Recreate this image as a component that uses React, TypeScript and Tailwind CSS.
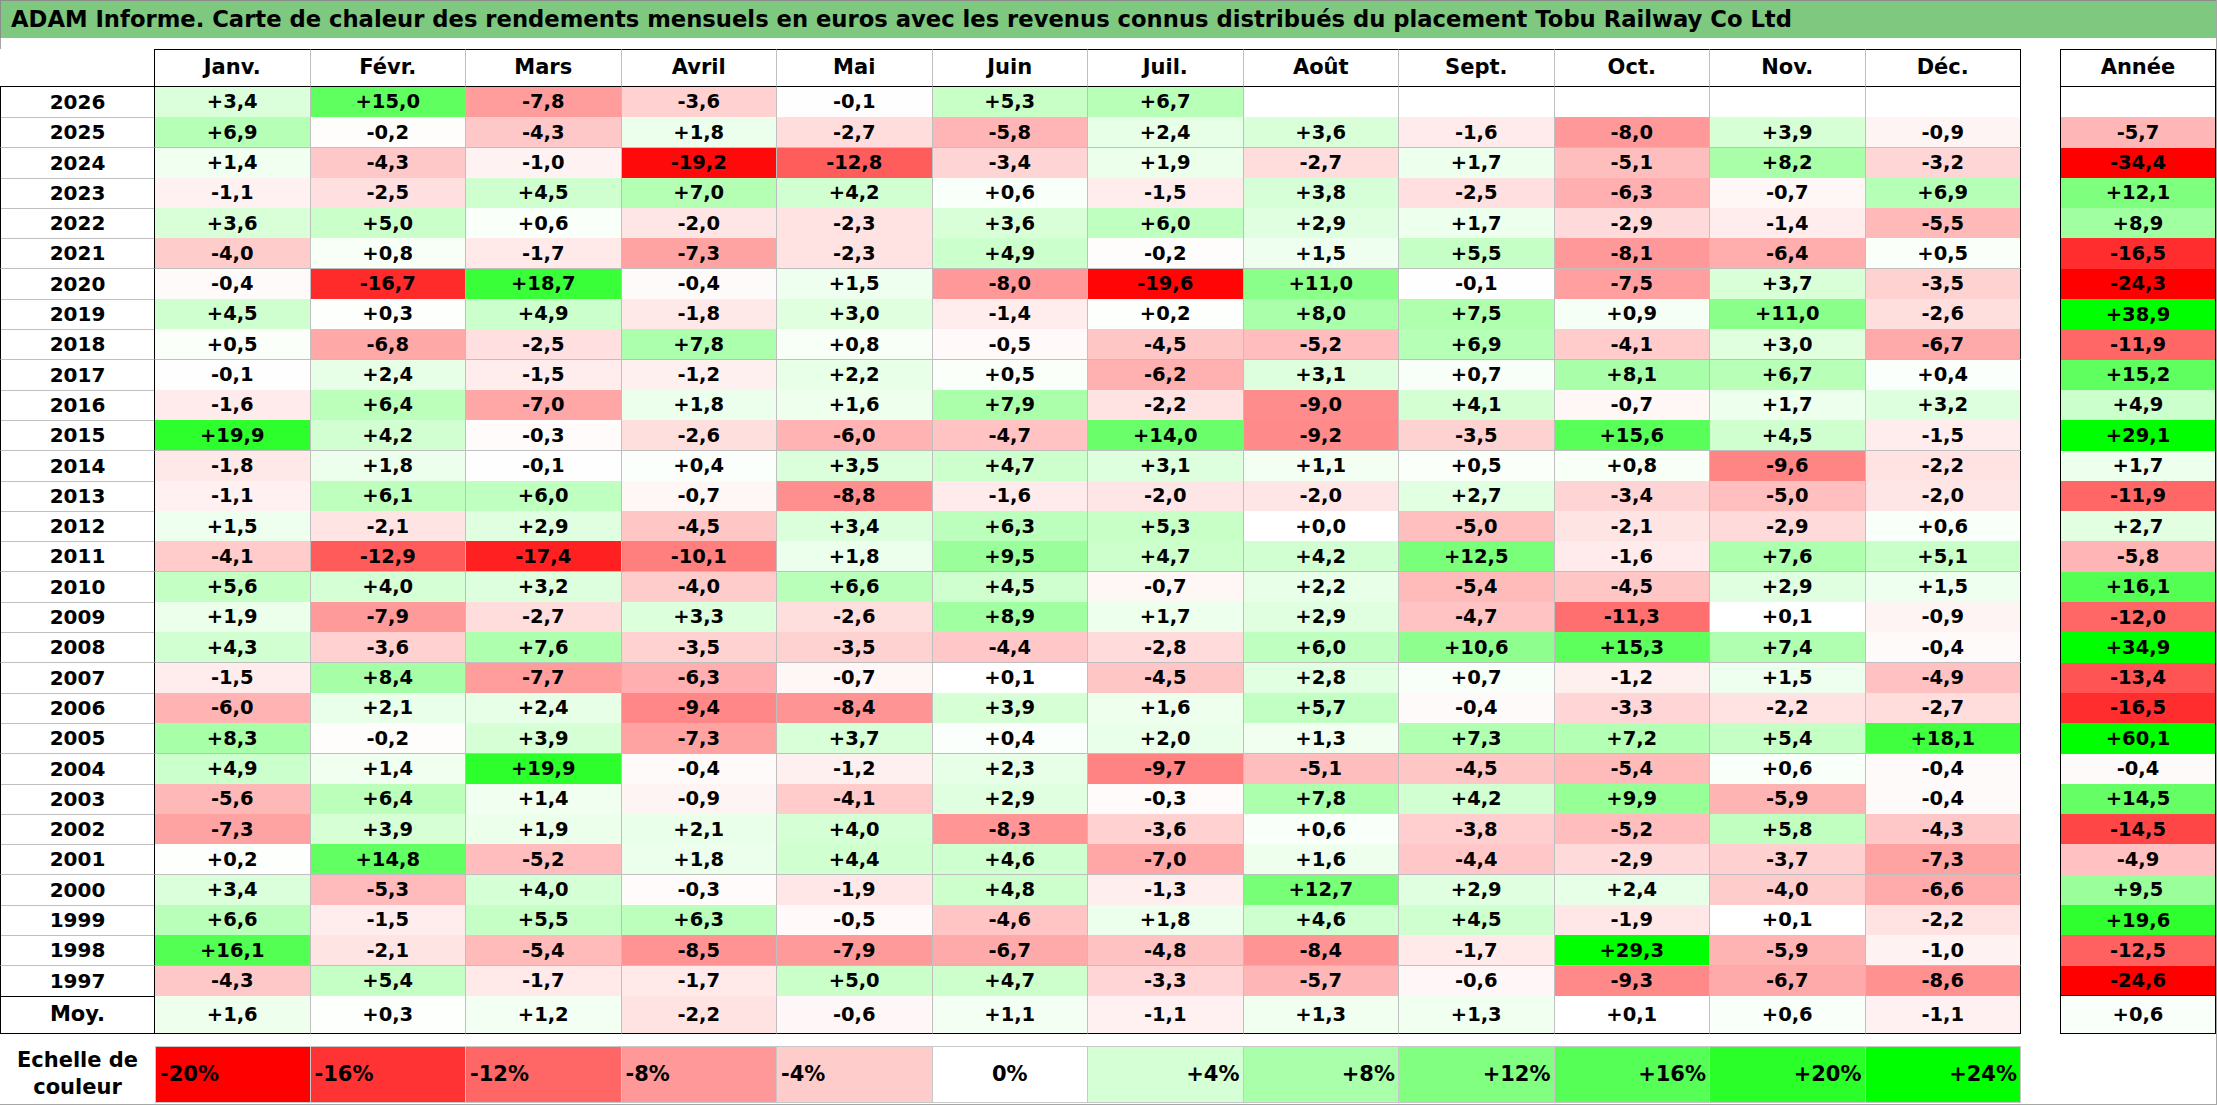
import React from "react";

const MONTHS = ["Janv.", "Févr.", "Mars", "Avril", "Mai", "Juin", "Juil.", "Août", "Sept.", "Oct.", "Nov.", "Déc."];

// year, 12 months, année  ("x" = pas de valeur)
const DATA = `
2026 +3,4 +15,0 -7,8 -3,6 -0,1 +5,3 +6,7 x x x x x x
2025 +6,9 -0,2 -4,3 +1,8 -2,7 -5,8 +2,4 +3,6 -1,6 -8,0 +3,9 -0,9 -5,7
2024 +1,4 -4,3 -1,0 -19,2 -12,8 -3,4 +1,9 -2,7 +1,7 -5,1 +8,2 -3,2 -34,4
2023 -1,1 -2,5 +4,5 +7,0 +4,2 +0,6 -1,5 +3,8 -2,5 -6,3 -0,7 +6,9 +12,1
2022 +3,6 +5,0 +0,6 -2,0 -2,3 +3,6 +6,0 +2,9 +1,7 -2,9 -1,4 -5,5 +8,9
2021 -4,0 +0,8 -1,7 -7,3 -2,3 +4,9 -0,2 +1,5 +5,5 -8,1 -6,4 +0,5 -16,5
2020 -0,4 -16,7 +18,7 -0,4 +1,5 -8,0 -19,6 +11,0 -0,1 -7,5 +3,7 -3,5 -24,3
2019 +4,5 +0,3 +4,9 -1,8 +3,0 -1,4 +0,2 +8,0 +7,5 +0,9 +11,0 -2,6 +38,9
2018 +0,5 -6,8 -2,5 +7,8 +0,8 -0,5 -4,5 -5,2 +6,9 -4,1 +3,0 -6,7 -11,9
2017 -0,1 +2,4 -1,5 -1,2 +2,2 +0,5 -6,2 +3,1 +0,7 +8,1 +6,7 +0,4 +15,2
2016 -1,6 +6,4 -7,0 +1,8 +1,6 +7,9 -2,2 -9,0 +4,1 -0,7 +1,7 +3,2 +4,9
2015 +19,9 +4,2 -0,3 -2,6 -6,0 -4,7 +14,0 -9,2 -3,5 +15,6 +4,5 -1,5 +29,1
2014 -1,8 +1,8 -0,1 +0,4 +3,5 +4,7 +3,1 +1,1 +0,5 +0,8 -9,6 -2,2 +1,7
2013 -1,1 +6,1 +6,0 -0,7 -8,8 -1,6 -2,0 -2,0 +2,7 -3,4 -5,0 -2,0 -11,9
2012 +1,5 -2,1 +2,9 -4,5 +3,4 +6,3 +5,3 +0,0 -5,0 -2,1 -2,9 +0,6 +2,7
2011 -4,1 -12,9 -17,4 -10,1 +1,8 +9,5 +4,7 +4,2 +12,5 -1,6 +7,6 +5,1 -5,8
2010 +5,6 +4,0 +3,2 -4,0 +6,6 +4,5 -0,7 +2,2 -5,4 -4,5 +2,9 +1,5 +16,1
2009 +1,9 -7,9 -2,7 +3,3 -2,6 +8,9 +1,7 +2,9 -4,7 -11,3 +0,1 -0,9 -12,0
2008 +4,3 -3,6 +7,6 -3,5 -3,5 -4,4 -2,8 +6,0 +10,6 +15,3 +7,4 -0,4 +34,9
2007 -1,5 +8,4 -7,7 -6,3 -0,7 +0,1 -4,5 +2,8 +0,7 -1,2 +1,5 -4,9 -13,4
2006 -6,0 +2,1 +2,4 -9,4 -8,4 +3,9 +1,6 +5,7 -0,4 -3,3 -2,2 -2,7 -16,5
2005 +8,3 -0,2 +3,9 -7,3 +3,7 +0,4 +2,0 +1,3 +7,3 +7,2 +5,4 +18,1 +60,1
2004 +4,9 +1,4 +19,9 -0,4 -1,2 +2,3 -9,7 -5,1 -4,5 -5,4 +0,6 -0,4 -0,4
2003 -5,6 +6,4 +1,4 -0,9 -4,1 +2,9 -0,3 +7,8 +4,2 +9,9 -5,9 -0,4 +14,5
2002 -7,3 +3,9 +1,9 +2,1 +4,0 -8,3 -3,6 +0,6 -3,8 -5,2 +5,8 -4,3 -14,5
2001 +0,2 +14,8 -5,2 +1,8 +4,4 +4,6 -7,0 +1,6 -4,4 -2,9 -3,7 -7,3 -4,9
2000 +3,4 -5,3 +4,0 -0,3 -1,9 +4,8 -1,3 +12,7 +2,9 +2,4 -4,0 -6,6 +9,5
1999 +6,6 -1,5 +5,5 +6,3 -0,5 -4,6 +1,8 +4,6 +4,5 -1,9 +0,1 -2,2 +19,6
1998 +16,1 -2,1 -5,4 -8,5 -7,9 -6,7 -4,8 -8,4 -1,7 +29,3 -5,9 -1,0 -12,5
1997 -4,3 +5,4 -1,7 -1,7 +5,0 +4,7 -3,3 -5,7 -0,6 -9,3 -6,7 -8,6 -24,6
`
  .trim()
  .split("\n")
  .map((l) => l.trim().split(/\s+/));

const AVG = "+1,6 +0,3 +1,2 -2,2 -0,6 +1,1 -1,1 +1,3 +1,3 +0,1 +0,6 -1,1 +0,6".split(" ");

const SCALE = [-20, -16, -12, -8, -4, 0, 4, 8, 12, 16, 20, 24];

// rouge jusqu'a -20 %, vert jusqu'a +24 %
const heat = (s: string) => {
  if (s === "x") return "#ffffff";
  const v = parseFloat(s.replace(",", "."));
  if (v < 0) {
    const c = Math.round(255 * (1 - Math.min(1, -v / 20)));
    return `rgb(255,${c},${c})`;
  }
  const c = Math.round(255 * (1 - Math.min(1, v / 24)));
  return `rgb(${c},255,${c})`;
};

const GRID = "grid grid-cols-[155px_repeat(12,minmax(0,1fr))] w-[2021px]";

const App = () => {
  return (
    <div className="w-[2217px] h-[1105px] bg-white border-r border-b border-[#a6a6a6] font-['DejaVu_Sans',sans-serif] font-bold text-black flex flex-col overflow-hidden">
      {/* TITLE */}
      <div className="h-[38px] shrink-0 bg-[#7ec87f] border-t border-l border-[#8c8c8c] flex items-center pl-[10px] text-[22.7px] whitespace-nowrap">
        ADAM Informe. Carte de chaleur des rendements mensuels en euros avec les revenus connus distribués du placement Tobu Railway Co Ltd
      </div>
      <div className="h-[11px] shrink-0 border-l border-[#a6a6a6]" />

      <div className="flex items-start shrink-0">
        {/* MONTHS TABLE */}
        <div className="w-[2021px]">
          <div className={`${GRID} h-[38px]`}>
            <div className="border-r border-b border-black" />
            {MONTHS.map((m, i) => (
              <div
                key={m}
                className={`flex items-center justify-center text-[21px] border-t border-b border-r border-t-black border-b-black ${
                  i === 11 ? "border-r-black" : "border-r-[#bfbfbf]"
                }`}
              >
                {m}
              </div>
            ))}
          </div>

          {DATA.map((row, r) => (
            <div key={row[0]} className={`${GRID} h-[30.3px]`}>
              <div
                className={`flex items-center justify-center text-[20px] border-l border-r border-b border-l-black border-r-black ${
                  r === DATA.length - 1 ? "border-b-black" : "border-b-[#bfbfbf]"
                }`}
              >
                {row[0]}
              </div>
              {row.slice(1, 13).map((v, i) => (
                <div
                  key={i}
                  className={`flex items-center justify-center text-[19.5px] border-r border-b ${
                    i === 11 ? "border-r-black" : "border-r-[#bfbfbf]"
                  } ${r === DATA.length - 1 ? "border-b-black" : "border-b-[#bfbfbf]"}`}
                  style={{ backgroundColor: heat(v) }}
                >
                  {v === "x" ? "" : v}
                </div>
              ))}
            </div>
          ))}

          <div className={`${GRID} h-[38px]`}>
            <div className="flex items-center justify-center text-[21px] border-l border-r border-b border-black">
              Moy.
            </div>
            {AVG.slice(0, 12).map((v, i) => (
              <div
                key={i}
                className={`flex items-center justify-center text-[19.5px] border-r border-b border-b-black ${
                  i === 11 ? "border-r-black" : "border-r-[#bfbfbf]"
                }`}
                style={{ backgroundColor: heat(v) }}
              >
                {v}
              </div>
            ))}
          </div>
        </div>

        <div className="w-[39px] shrink-0" />

        {/* YEAR TABLE */}
        <div className="w-[156px] shrink-0">
          <div className="h-[38px] flex items-center justify-center text-[21px] border border-black">
            Année
          </div>
          {DATA.map((row, r) => (
            <div
              key={row[0]}
              className={`h-[30.3px] flex items-center justify-center text-[19.5px] border-l border-r border-black ${
                r === DATA.length - 1 ? "border-b" : ""
              }`}
              style={{ backgroundColor: heat(row[13]) }}
            >
              {row[13] === "x" ? "" : row[13]}
            </div>
          ))}
          <div
            className="h-[38px] flex items-center justify-center text-[19.5px] border-l border-r border-b border-black"
            style={{ backgroundColor: heat(AVG[12]) }}
          >
            {AVG[12]}
          </div>
        </div>
      </div>

      <div className="h-[12px] shrink-0" />

      {/* LEGEND */}
      <div className={`${GRID} h-[57px] shrink-0`}>
        <div className="flex items-center justify-center text-center text-[21px] leading-[27px]">
          Echelle de
          <br />
          couleur
        </div>
        {SCALE.map((s, i) => (
          <div
            key={s}
            className={`flex items-center text-[21px] border-t border-b border-r border-[#c8c8c8] ${i === 0 ? "border-l" : ""} ${
              s < 0 ? "justify-start pl-[4px]" : s === 0 ? "justify-center" : "justify-end pr-[3px]"
            }`}
            style={{ backgroundColor: heat(String(s)) }}
          >
            {s > 0 ? `+${s}%` : `${s}%`}
          </div>
        ))}
      </div>
    </div>
  );
};

export default App;
